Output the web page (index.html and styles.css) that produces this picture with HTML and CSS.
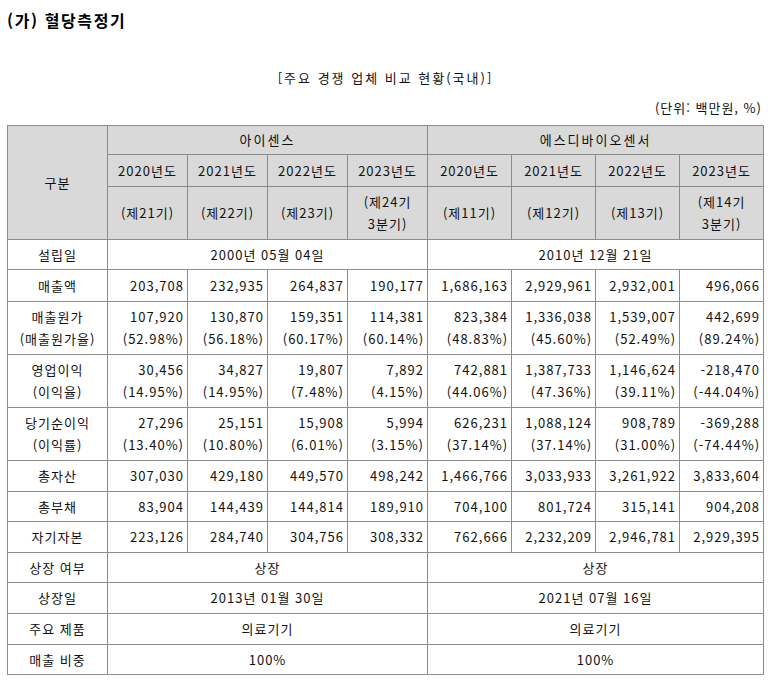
FILE: index.html
```html
<!DOCTYPE html>
<html lang="ko">
<head>
<meta charset="utf-8">
<link rel="stylesheet" href="styles.css">
</head>
<body>
<div class="page">
  <h1 class="title">(가) 혈당측정기</h1>
  <p class="caption">[주요 경쟁 업체 비교 현황(국내)]</p>
  <p class="unit">(단위: 백만원, %)</p>
  <table class="cmp">
    <colgroup>
      <col class="c-label">
      <col class="c-a"><col class="c-a"><col class="c-a"><col class="c-a">
      <col class="c-b"><col class="c-b"><col class="c-b"><col class="c-b">
    </colgroup>
    <thead>
      <tr class="h1">
        <th rowspan="3" class="hd">구분</th>
        <th colspan="4" class="hd wide">아이센스</th>
        <th colspan="4" class="hd wide">에스디바이오센서</th>
      </tr>
      <tr class="h2">
        <th class="hd">2020년도</th><th class="hd">2021년도</th><th class="hd">2022년도</th><th class="hd">2023년도</th>
        <th class="hd">2020년도</th><th class="hd">2021년도</th><th class="hd">2022년도</th><th class="hd">2023년도</th>
      </tr>
      <tr class="h3">
        <th class="hd">(제21기)</th><th class="hd">(제22기)</th><th class="hd">(제23기)</th><th class="hd">(제24기<br>3분기)</th>
        <th class="hd">(제11기)</th><th class="hd">(제12기)</th><th class="hd">(제13기)</th><th class="hd">(제14기<br>3분기)</th>
      </tr>
    </thead>
    <tbody>
      <tr class="r30">
        <td class="lb">설립일</td>
        <td colspan="4" class="ct">2000년 05월 04일</td>
        <td colspan="4" class="ct">2010년 12월 21일</td>
      </tr>
      <tr class="r33">
        <td class="lb">매출액</td>
        <td class="nm">203,708</td><td class="nm">232,935</td><td class="nm">264,837</td><td class="nm">190,177</td>
        <td class="nm">1,686,163</td><td class="nm">2,929,961</td><td class="nm">2,932,001</td><td class="nm">496,066</td>
      </tr>
      <tr class="r53">
        <td class="lb">매출원가<br>(매출원가율)</td>
        <td class="nm">107,920<br>(52.98%)</td><td class="nm">130,870<br>(56.18%)</td><td class="nm">159,351<br>(60.17%)</td><td class="nm">114,381<br>(60.14%)</td>
        <td class="nm">823,384<br>(48.83%)</td><td class="nm">1,336,038<br>(45.60%)</td><td class="nm">1,539,007<br>(52.49%)</td><td class="nm">442,699<br>(89.24%)</td>
      </tr>
      <tr class="r54">
        <td class="lb">영업이익<br>(이익율)</td>
        <td class="nm">30,456<br>(14.95%)</td><td class="nm">34,827<br>(14.95%)</td><td class="nm">19,807<br>(7.48%)</td><td class="nm">7,892<br>(4.15%)</td>
        <td class="nm">742,881<br>(44.06%)</td><td class="nm">1,387,733<br>(47.36%)</td><td class="nm">1,146,624<br>(39.11%)</td><td class="nm">-218,470<br>(-44.04%)</td>
      </tr>
      <tr class="r53">
        <td class="lb">당기순이익<br>(이익률)</td>
        <td class="nm">27,296<br>(13.40%)</td><td class="nm">25,151<br>(10.80%)</td><td class="nm">15,908<br>(6.01%)</td><td class="nm">5,994<br>(3.15%)</td>
        <td class="nm">626,231<br>(37.14%)</td><td class="nm">1,088,124<br>(37.14%)</td><td class="nm">908,789<br>(31.00%)</td><td class="nm">-369,288<br>(-74.44%)</td>
      </tr>
      <tr class="r31">
        <td class="lb">총자산</td>
        <td class="nm">307,030</td><td class="nm">429,180</td><td class="nm">449,570</td><td class="nm">498,242</td>
        <td class="nm">1,466,766</td><td class="nm">3,033,933</td><td class="nm">3,261,922</td><td class="nm">3,833,604</td>
      </tr>
      <tr class="r30">
        <td class="lb">총부채</td>
        <td class="nm">83,904</td><td class="nm">144,439</td><td class="nm">144,814</td><td class="nm">189,910</td>
        <td class="nm">704,100</td><td class="nm">801,724</td><td class="nm">315,141</td><td class="nm">904,208</td>
      </tr>
      <tr class="r31">
        <td class="lb">자기자본</td>
        <td class="nm">223,126</td><td class="nm">284,740</td><td class="nm">304,756</td><td class="nm">308,332</td>
        <td class="nm">762,666</td><td class="nm">2,232,209</td><td class="nm">2,946,781</td><td class="nm">2,929,395</td>
      </tr>
      <tr class="r30">
        <td class="lb">상장 여부</td>
        <td colspan="4" class="ct">상장</td>
        <td colspan="4" class="ct">상장</td>
      </tr>
      <tr class="r31">
        <td class="lb">상장일</td>
        <td colspan="4" class="ct">2013년 01월 30일</td>
        <td colspan="4" class="ct">2021년 07월 16일</td>
      </tr>
      <tr class="r31">
        <td class="lb">주요 제품</td>
        <td colspan="4" class="ct">의료기기</td>
        <td colspan="4" class="ct">의료기기</td>
      </tr>
      <tr class="r30">
        <td class="lb">매출 비중</td>
        <td colspan="4" class="ct">100%</td>
        <td colspan="4" class="ct">100%</td>
      </tr>
    </tbody>
  </table>
</div>
</body>
</html>
```

FILE: styles.css
```css
html, body {
  margin: 0;
  padding: 0;
  background: #ffffff;
}

body {
  font-family: "Noto Sans CJK KR", "Noto Sans", sans-serif;
  color: #111111;
  font-size: 13px;
  letter-spacing: 1px;
}

.page {
  padding: 9px 0 0 7px;
  width: 757px;
}

.title {
  margin: 0;
  font-size: 16px;
  line-height: 22px;
  font-weight: bold;
  color: #000000;
  letter-spacing: 1.6px;
}

.caption {
  margin: 38px 0 0 0;
  text-align: center;
  line-height: 18px;
  letter-spacing: 2px;
}

.unit {
  margin: 12px 0 0 0;
  text-align: right;
  line-height: 18px;
  padding-right: 2px;
}

.cmp {
  margin-top: 8px;
  width: 757px;
  table-layout: fixed;
  border-collapse: collapse;
  border: 1px solid #000000;
}

.c-label { width: 100px; }
.c-a { width: 80px; }
.c-b { width: 84px; }

.cmp th,
.cmp td {
  border: 1px solid #8c8c8c;
  padding: 0 3px;
  font-weight: normal;
  line-height: 22px;
  vertical-align: middle;
  white-space: nowrap;
}

.hd {
  background: #d9d9d9;
  text-align: center;
}

.wide { letter-spacing: 2px; }

.lb { text-align: center; }
.ct { text-align: center; }
.nm { text-align: right; }

.h1 { height: 29px; }
.h2 { height: 32px; }
.h3 { height: 53px; }
.r30 { height: 30px; }
.r31 { height: 31px; }
.r33 { height: 32px; }
.r53 { height: 53px; }
.r54 { height: 53px; }
```
